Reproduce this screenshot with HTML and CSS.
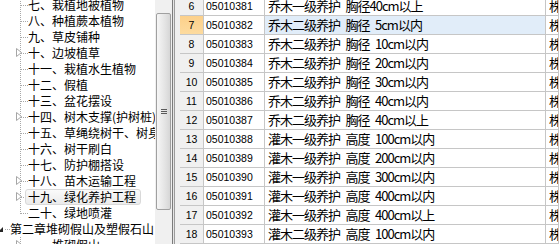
FILE: index.html
```html
<!DOCTYPE html>
<html lang="zh-CN">
<head>
    <title>绿化养护工程</title>
    <meta charset="UTF-8">
    <meta name="viewport" content="width=device-width, initial-scale=1.0">
    <link rel="stylesheet" href="styles.css">
</head>
<body>
    <div class="window">
        <div class="tree">
            <div class="tree-list">
                <div class="node"><span class="joint"></span><span class="label">七、栽植地被植物</span></div>
                <div class="node"><span class="joint"></span><span class="label">八、种植蕨本植物</span></div>
                <div class="node"><span class="joint"></span><span class="label">九、草皮铺种</span></div>
                <div class="node"><span class="joint"><svg class="arrow" width="6" height="9" viewBox="0 0 6 9"><polygon points="0.5,0.5 5.5,4.5 0.5,8.5" /></svg></span><span class="label">十、边坡植草</span></div>
                <div class="node"><span class="joint"></span><span class="label">十一、栽植水生植物</span></div>
                <div class="node"><span class="joint"></span><span class="label">十二、假植</span></div>
                <div class="node"><span class="joint"></span><span class="label">十三、盆花摆设</span></div>
                <div class="node"><span class="joint"><svg class="arrow" width="6" height="9" viewBox="0 0 6 9"><polygon points="0.5,0.5 5.5,4.5 0.5,8.5" /></svg></span><span class="label">十四、树木支撑(护树桩)</span></div>
                <div class="node"><span class="joint"></span><span class="label">十五、草绳绕树干、树身</span></div>
                <div class="node"><span class="joint"></span><span class="label">十六、树干刷白</span></div>
                <div class="node"><span class="joint"></span><span class="label">十七、防护棚搭设</span></div>
                <div class="node"><span class="joint"><svg class="arrow" width="6" height="9" viewBox="0 0 6 9"><polygon points="0.5,0.5 5.5,4.5 0.5,8.5" /></svg></span><span class="label">十八、苗木运输工程</span></div>
                <div class="node"><span class="joint"><svg class="arrow" width="6" height="9" viewBox="0 0 6 9"><polygon points="0.5,0.5 5.5,4.5 0.5,8.5" /></svg></span><span class="label selected">十九、绿化养护工程</span></div>
                <div class="node"><span class="joint last"></span><span class="label">二十、绿地喷灌</span></div>
                <div class="node"><span class="joint root"><svg class="open" width="6" height="6" viewBox="0 0 6 6"><polygon points="5,0 5,5 0,5" /></svg></span><span class="label">第二章堆砌假山及塑假石山</span></div>
                <div class="node"><span class="joint"><svg class="arrow" width="6" height="9" viewBox="0 0 6 9"><polygon points="0.5,0.5 5.5,4.5 0.5,8.5" /></svg></span><span class="label">一、堆砌假山</span></div>
            </div>
        </div>
        <div class="vscroll">
            <div class="thumb"><span class="grip"></span></div>
        </div>
        <div class="splitter"></div>
        <div class="grid">
            <div class="grid-body">
                <div class="row"><div class="num">6</div><div class="code">05010381</div><div class="name">乔木一级养护&ensp;胸径40cm以上</div><div class="unit">株</div></div>
                <div class="row current"><div class="num">7</div><div class="code">05010382</div><div class="name">乔木二级养护&ensp;胸径&ensp;5cm以内</div><div class="unit">株</div></div>
                <div class="row"><div class="num">8</div><div class="code">05010383</div><div class="name">乔木二级养护&ensp;胸径&ensp;10cm以内</div><div class="unit">株</div></div>
                <div class="row"><div class="num">9</div><div class="code">05010384</div><div class="name">乔木二级养护&ensp;胸径&ensp;20cm以内</div><div class="unit">株</div></div>
                <div class="row"><div class="num">10</div><div class="code">05010385</div><div class="name">乔木二级养护&ensp;胸径&ensp;30cm以内</div><div class="unit">株</div></div>
                <div class="row"><div class="num">11</div><div class="code">05010386</div><div class="name">乔木二级养护&ensp;胸径&ensp;40cm以内</div><div class="unit">株</div></div>
                <div class="row"><div class="num">12</div><div class="code">05010387</div><div class="name">乔木二级养护&ensp;胸径&ensp;40cm以上</div><div class="unit">株</div></div>
                <div class="row"><div class="num">13</div><div class="code">05010388</div><div class="name">灌木一级养护&ensp;高度&ensp;100cm以内</div><div class="unit">株</div></div>
                <div class="row"><div class="num">14</div><div class="code">05010389</div><div class="name">灌木一级养护&ensp;高度&ensp;200cm以内</div><div class="unit">株</div></div>
                <div class="row"><div class="num">15</div><div class="code">05010390</div><div class="name">灌木一级养护&ensp;高度&ensp;300cm以内</div><div class="unit">株</div></div>
                <div class="row"><div class="num">16</div><div class="code">05010391</div><div class="name">灌木一级养护&ensp;高度&ensp;400cm以内</div><div class="unit">株</div></div>
                <div class="row"><div class="num">17</div><div class="code">05010392</div><div class="name">灌木一级养护&ensp;高度&ensp;400cm以上</div><div class="unit">株</div></div>
                <div class="row"><div class="num">18</div><div class="code">05010393</div><div class="name">灌木二级养护&ensp;高度&ensp;100cm以内</div><div class="unit">株</div></div>
            </div>
        </div>
    </div>
</body>
</html>
```
FILE: styles.css
```css
body {
    margin: 0;
    padding: 0;
    background-color: #ffffff;
    font-family: "Noto Sans CJK SC", sans-serif;
    color: #000000;
}
.window {
    display: flex;
    width: 559px;
    height: 244px;
    overflow: hidden;
}

/* tree */
.tree {
    width: 155px;
    flex: none;
    overflow: hidden;
    background-color: #ffffff;
}
.tree-list {
    margin-top: -3px;
}
.node {
    display: flex;
    align-items: center;
    height: 16px;
    white-space: nowrap;
    font-size: 12px;
}
.joint {
    flex: none;
    display: flex;
    align-items: center;
    width: 12px;
    height: 16px;
    margin-left: 16px;
    background-image:
        repeating-linear-gradient(to bottom, #a8a8a8 0 1px, transparent 1px 2px),
        repeating-linear-gradient(to right, #a8a8a8 0 1px, transparent 1px 2px);
    background-size: 1px 16px, 7px 1px;
    background-position: 4px 0, 5px 8px;
    background-repeat: no-repeat;
}
.joint.last {
    background-size: 1px 9px, 7px 1px;
}
.joint.root {
    width: 10px;
    margin-left: 0;
    background-image: repeating-linear-gradient(to right, #a8a8a8 0 1px, transparent 1px 2px);
    background-size: 5px 1px;
    background-position: 5px 8px;
}
.arrow {
    display: block;
    margin-top: -1px;
}
.arrow polygon {
    fill: #ffffff;
    stroke: #a6a6a6;
    stroke-width: 1;
}
.open {
    display: block;
    margin-left: -2px;
    margin-top: 1px;
}
.open polygon {
    fill: #262626;
}
.label {
    display: block;
    box-sizing: border-box;
    height: 16px;
    line-height: 14px;
    margin-left: -3px;
    padding: 0 4px 0 2px;
    border: 1px solid transparent;
    border-radius: 3px;
}
.label.selected {
    border-color: #d9d9d9;
    background: linear-gradient(to bottom, #fafafa, #ebebeb);
}

/* scrollbar + splitter */
.vscroll {
    width: 17px;
    flex: none;
    box-sizing: border-box;
    padding-top: 13px;
    padding-left: 1px;
    background-color: #f0f0f0;
}
.thumb {
    display: flex;
    align-items: center;
    justify-content: center;
    box-sizing: border-box;
    width: 15px;
    height: 197px;
    border: 1px solid #a0a0a0;
    border-radius: 2px;
    background: linear-gradient(to right, #f6f6f6, #e4e4e4 60%, #d6d6d6);
}
.grip {
    width: 6px;
    height: 5px;
    background: repeating-linear-gradient(to bottom, #5a5a5a 0 1px, transparent 1px 2px);
}
.splitter {
    width: 8px;
    flex: none;
    background: linear-gradient(to right, #7c7c7c 0 1px, #e6e6e6 1px 2px, #9c9c9c 2px 3px, #f0f0f0 3px);
}

/* grid */
.grid {
    flex: 1;
    overflow: hidden;
}
.grid-body {
    margin-top: -3px;
}
.row {
    display: grid;
    grid-template-columns: 24px 61px 281px 1fr;
    height: 19px;
}
.row > div {
    box-sizing: border-box;
    border-right: 1px solid #c6c6c6;
    border-bottom: 1px solid #c6c6c6;
    line-height: 18px;
    white-space: nowrap;
    overflow: hidden;
}
.num {
    background-color: #f0f0f0;
    text-align: center;
    font-family: "Liberation Sans", sans-serif;
    font-size: 10.5px;
}
.code {
    padding-left: 2px;
    font-family: "Liberation Sans", sans-serif;
    font-size: 10.5px;
}
.name, .unit {
    padding-left: 3px;
    font-size: 13px;
    letter-spacing: -1px;
}
.row.current .num {
    background: linear-gradient(to bottom, #fcd08a, #fddb9f);
}
.row.current .name {
    background-color: #e1edf9;
}
```
